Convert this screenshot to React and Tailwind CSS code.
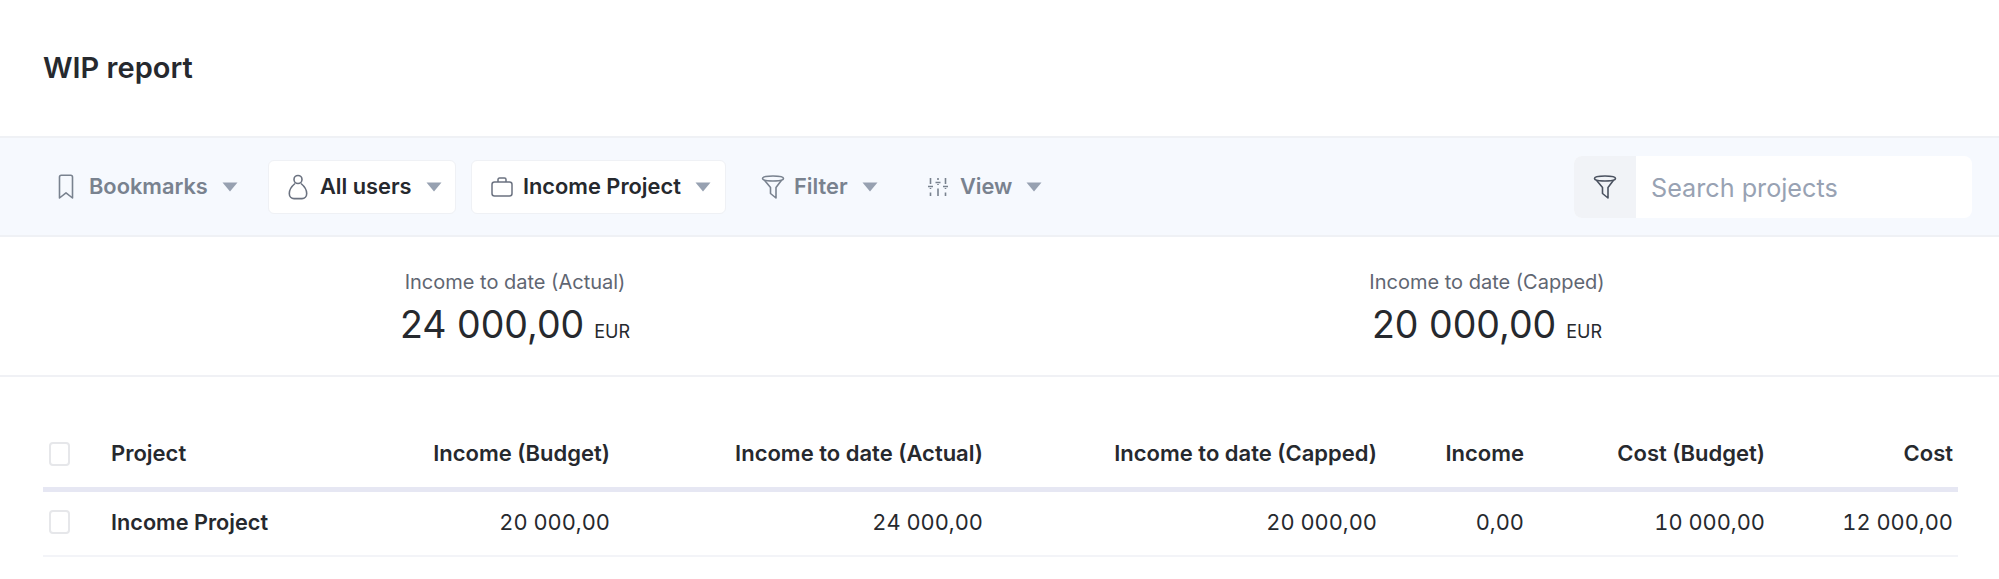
const Caret = () => (
  <svg width="16" height="10" viewBox="0 0 16 10" className="shrink-0 ml-[14px]">
    <path d="M0.5 0.5H15.5L8 9.5Z" fill="#97a1b1" />
  </svg>
)

const BookmarkIcon = () => (
  <svg width="16" height="26" viewBox="0 0 16 26" fill="none" stroke="#79828f" strokeWidth="1.6" strokeLinejoin="round" className="shrink-0 mr-[15px]">
    <path d="M1.5 3C1.5 1.9 2.2 1.2 3.3 1.2H12.7C13.8 1.2 14.5 1.9 14.5 3V24L8 18.8L1.5 24Z" />
  </svg>
)

const UserIcon = () => (
  <svg width="20" height="26" viewBox="0 0 20 26" fill="none" stroke="#6b7280" strokeWidth="1.6" className="shrink-0 mr-[12px]">
    <circle cx="10" cy="5.5" r="4" />
    <path d="M7 9.5C4 12 1.3 15.5 1.3 19.5C1.3 22.8 3.5 24.6 6 24.6H14C16.5 24.6 18.7 22.8 18.7 19.5C18.7 15.5 16 12 13 9.5" />
  </svg>
)

const CaseIcon = () => (
  <svg width="22" height="20" viewBox="0 0 22 20" fill="none" stroke="#6b7280" strokeWidth="1.5" className="shrink-0 mr-[10px]">
    <rect x="1" y="5" width="20" height="14" rx="2.5" />
    <path d="M7 5V2.5C7 1.6 7.6 1 8.5 1H13.5C14.4 1 15 1.6 15 2.5V5" />
  </svg>
)

const FunnelIcon = ({ color, cls }) => (
  <svg width="24" height="24" viewBox="0 0 24 24" fill="none" stroke={color} strokeWidth="1.6" strokeLinejoin="round" className={cls}>
    <path d="M1.5 3.5C1.5 2 5 1 12 1C19 1 22.5 2 22.5 3.5C22.5 4.2 21.8 4.8 20.5 5.3L15 12.5V23L9.5 18.5V12.5L3.5 5.3C2.2 4.8 1.5 4.2 1.5 3.5Z" />
    <path d="M3.5 5.3C6 6.2 18 6.2 20.5 5.3" />
  </svg>
)

const SlidersIcon = () => (
  <svg width="20" height="20" viewBox="0 0 20 20" fill="none" stroke="#79828f" strokeWidth="1.6" className="shrink-0 mr-[12px]">
    <path d="M2.5 1V7M2.5 11V12M2.5 15.5V19M10 1V3M10 7V8M10 11.5V19M17.5 1V7M17.5 11V12M17.5 15.5V19" />
    <path d="M0 9.5H5M7.5 5.5H12.5M15 9.5H20" />
  </svg>
)

const filters = [
  { label: "Bookmarks", icon: <BookmarkIcon />, box: false, cls: "w-[202px] pl-[15px]" },
  { label: "All users", icon: <UserIcon />, box: true, cls: "w-[188px] pl-[19px] ml-[23px]" },
  { label: "Income Project", icon: <CaseIcon />, box: true, cls: "w-[255px] pl-[19px] ml-[15px]" },
  { label: "Filter", icon: <FunnelIcon color="#79828f" cls="shrink-0 mr-[9px]" />, box: false, cls: "w-[130px] pl-[21px] ml-[14px]" },
  { label: "View", icon: <SlidersIcon />, box: false, cls: "w-[170px] pl-[38px] ml-[20px]" },
]

const columns = [
  { label: "Project", width: "w-[240px]", left: true },
  { label: "Income (Budget)", width: "w-[264px]" },
  { label: "Income to date (Actual)", width: "w-[373px]" },
  { label: "Income to date (Capped)", width: "w-[394px]" },
  { label: "Income", width: "w-[147px]" },
  { label: "Cost (Budget)", width: "w-[241px]" },
  { label: "Cost", width: "w-[188px]" },
]

const row = ["Income Project", "20 000,00", "24 000,00", "20 000,00", "0,00", "10 000,00", "12 000,00"]

const Checkbox = () => (
  <span className="block ml-[6px] w-[21px] h-[24px] rounded-[4px] border-2 border-[#e6e7ea] bg-white"></span>
)

function Stat({ label, amount, width }) {
  return (
    <div className={`${width} flex flex-col items-center`}>
      <div className="text-[20px] leading-[28px] text-[#5f6672]">{label}</div>
      <div className="flex items-baseline gap-[10px] mt-[6px] text-[#26292e]">
        <span className="text-[37.5px] leading-[46px]">{amount}</span>
        <span className="text-[18px]">EUR</span>
      </div>
    </div>
  )
}

export default function App() {
  return (
    <div className="bg-white h-[579px] overflow-hidden font-['Inter',sans-serif] text-[#26292e]">
      <div className="h-[136px] pl-[43px] pt-[50px]">
        <h1 className="text-[29px] leading-[36px] font-semibold">WIP report</h1>
      </div>

      <div className="h-[101px] bg-[#f6f9fe] border-y-2 border-[#eff1f5] flex items-center pl-[43px] pr-[27px]">
        {filters.map((f) => (
          <button
            key={f.label}
            className={`h-[54px] flex items-center whitespace-nowrap rounded-[6px] text-[21.8px] font-semibold ${f.cls} ${f.box ? "bg-white border border-[#eff1f5] text-[#26292e]" : "text-[#79828f]"}`}
          >
            {f.icon}
            <span>{f.label}</span>
            <Caret />
          </button>
        ))}
        <div className="ml-auto flex h-[62px] w-[398px] rounded-[8px] overflow-hidden bg-white">
          <div className="w-[62px] shrink-0 bg-[#f1f3f7] flex items-center justify-center">
            <FunnelIcon color="#4b5260" cls="shrink-0" />
          </div>
          <div className="flex-1 flex items-center pl-[15px] pt-[4px] text-[25.2px] text-[#98a2b3]">Search projects</div>
        </div>
      </div>

      <div className="h-[140px] border-b-2 border-[#f0f1f5] flex pt-[31px]">
        <Stat label="Income to date (Actual)" amount="24 000,00" width="w-[1030px]" />
        <Stat label="Income to date (Capped)" amount="20 000,00" width="w-[914px]" />
      </div>

      <div className="pl-[43px] pr-[41px] pt-[44px]">
        <table className="table-fixed w-[1915px] text-[22px] border-collapse">
          <thead>
            <tr className="h-[68px] border-b-[5px] border-[#e6e7f3]">
              <th className="w-[68px] text-left align-middle"><Checkbox /></th>
              {columns.map((c) => (
                <th key={c.label} className={`${c.width} font-semibold ${c.left ? "text-left" : "text-right pr-[5px]"}`}>
                  {c.label}
                </th>
              ))}
            </tr>
          </thead>
          <tbody>
            <tr className="h-[67px] border-b-2 border-[#f3f4f8]">
              <td className="align-middle pb-[2px]"><Checkbox /></td>
              {row.map((v, i) => (
                <td key={i} className={i === 0 ? "font-semibold text-[21.7px] text-left pb-[2px]" : "text-[21.8px] tabular-nums text-right pr-[5px] pb-[2px]"}>{v}</td>
              ))}
            </tr>
          </tbody>
        </table>
      </div>
    </div>
  )
}
